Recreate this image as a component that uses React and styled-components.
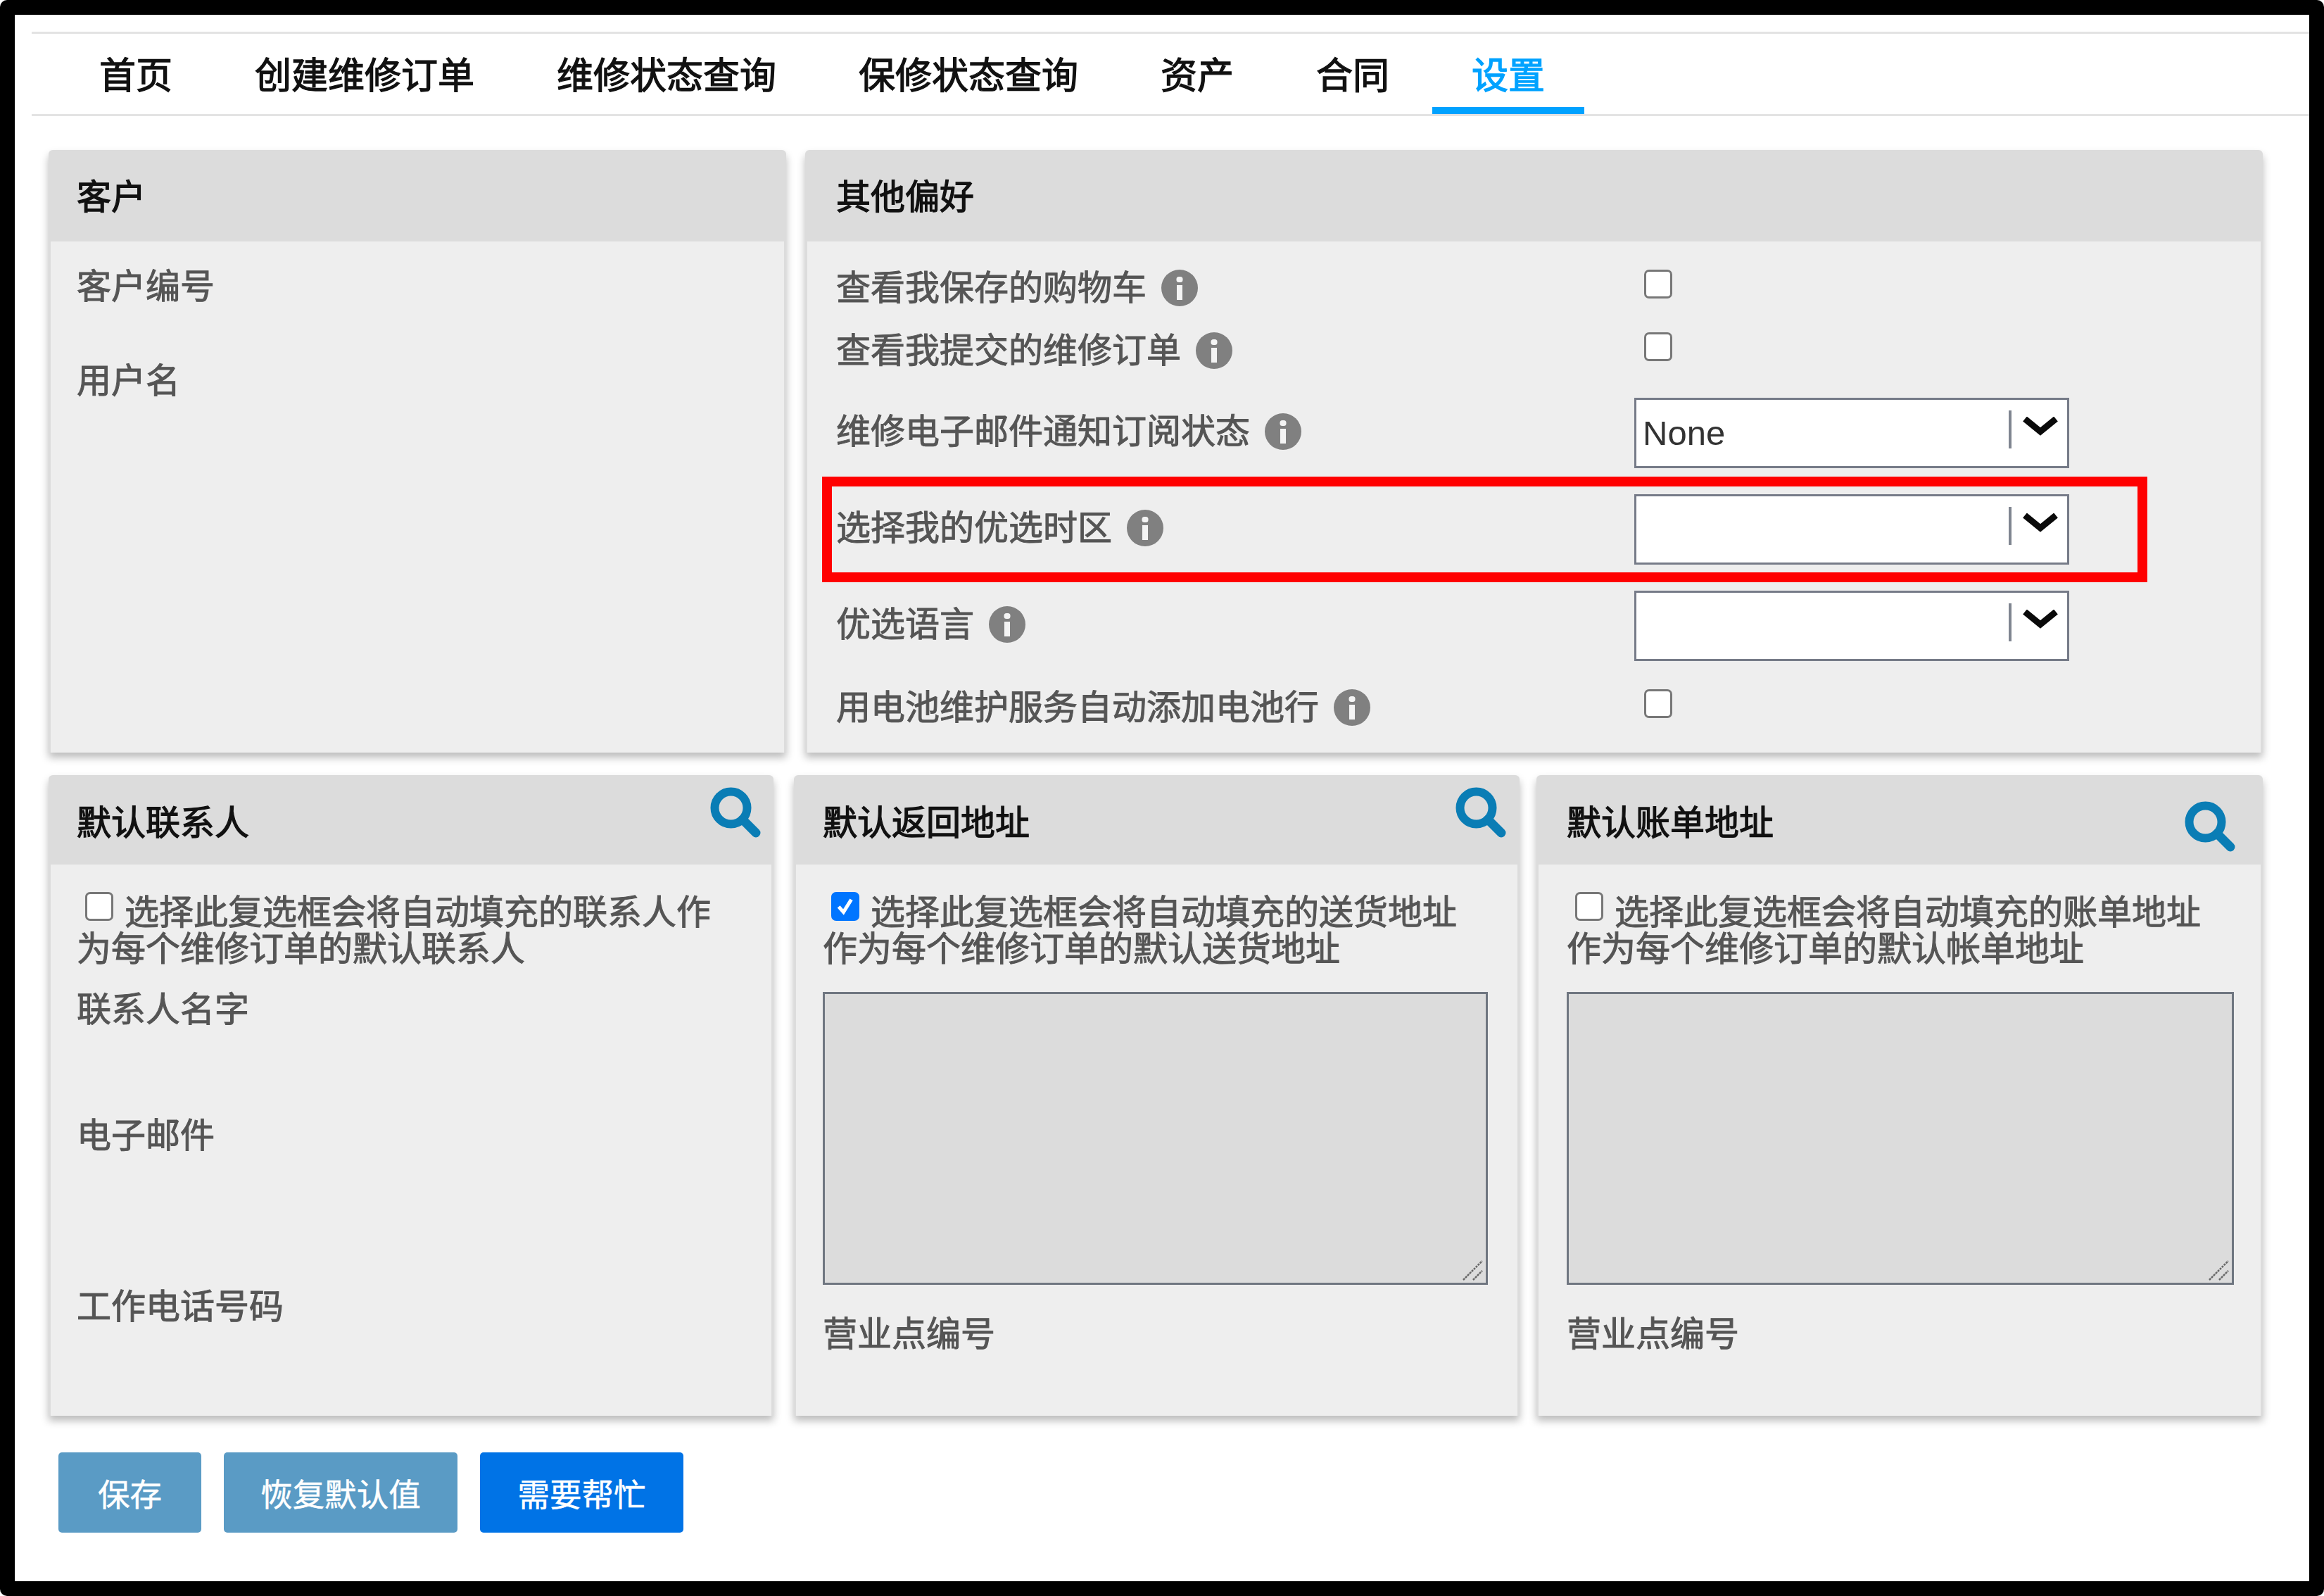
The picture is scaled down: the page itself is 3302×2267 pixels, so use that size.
import styled, { createGlobalStyle } from "styled-components";

const GlobalStyle = createGlobalStyle`
  html, body {
    margin: 0;
    padding: 0;
    background: #fff;
  }
  * {
    box-sizing: border-box;
  }
`;

const tabs = ["首页", "创建维修订单", "维修状态查询", "保修状态查询", "资产", "合同", "设置"];

const SearchIcon = () => (
  <svg width="72" height="72" viewBox="0 0 72 72">
    <circle cx="29.5" cy="29.5" r="23" fill="none" stroke="#0a7db5" strokeWidth="12" />
    <line x1="46" y1="46" x2="65" y2="65" stroke="#0a7db5" strokeWidth="13" strokeLinecap="round" />
  </svg>
);

const InfoIcon = () => (
  <InfoSvg viewBox="0 0 52 52">
    <circle cx="26" cy="26" r="26" fill="#808080" />
    <rect x="21.5" y="10" width="9" height="8" rx="3.5" fill="#f4f4f4" />
    <rect x="22" y="22" width="8" height="21" fill="#f4f4f4" />
  </InfoSvg>
);

const Chevron = () => (
  <svg width="52" height="28" viewBox="0 0 52 28">
    <path d="M4 3 L26 21 L48 3" fill="none" stroke="#0a0a0a" strokeWidth="9" />
  </svg>
);

const ResizeGrip = () => (
  <GripSvg viewBox="0 0 30 30">
    <line x1="1" y1="29" x2="28" y2="2" stroke="#666" strokeWidth="2.5" strokeDasharray="3 1.2" />
    <line x1="15" y1="29" x2="28" y2="16" stroke="#666" strokeWidth="2.5" strokeDasharray="3 1.2" />
  </GripSvg>
);

const Select = ({ value }) => (
  <SelectBox>
    <SelectValue>{value}</SelectValue>
    <SelectArrow>
      <Chevron />
    </SelectArrow>
  </SelectBox>
);

const PrefLabel = ({ children }) => (
  <LabelCell>
    <span>{children}</span>
    <InfoIcon />
  </LabelCell>
);

const AddressPanel = ({ title, checked, lines, width, gap, padLeft, areaWidth, iconRight, iconShift }) => (
  <Panel $width={width} $gap={gap}>
    <PanelHeader $height={127} $padLeft={padLeft} $padRight={iconRight}>
      <span>{title}</span>
      <IconSlot $shift={iconShift}>
        <SearchIcon />
      </IconSlot>
    </PanelHeader>
    <PanelBody $padLeft={padLeft - 3} $padTop={39}>
      <CheckText>
        <InlineBox type="checkbox" defaultChecked={checked} />
        {lines[0]}
        <br />
        {lines[1]}
      </CheckText>
      <AreaWrap $width={areaWidth}>
        <AddressArea readOnly />
        <ResizeGrip />
      </AreaWrap>
      <Field $top={44}>营业点编号</Field>
    </PanelBody>
  </Panel>
);

export default function App() {
  return (
    <>
      <GlobalStyle />
      <Frame>
        <Sheet>
          <TabBar>
            {tabs.map(tab => (
              <Tab key={tab} $active={tab === "设置"}>
                {tab}
              </Tab>
            ))}
          </TabBar>

          <TopRow>
            <Panel $width={1048}>
              <PanelHeader $height={130} $padLeft={40} $lift={5}>
                <span>客户</span>
              </PanelHeader>
              <PanelBody $padLeft={37} $padTop={38}>
                <Field>客户编号</Field>
                <Field $top={82}>用户名</Field>
              </PanelBody>
            </Panel>

            <Panel $width={2071} $gap={27}>
              <PanelHeader $height={130} $padLeft={44} $lift={5}>
                <span>其他偏好</span>
              </PanelHeader>
              <PanelBody $padLeft={41} $padTop={22}>
                <PrefRow $height={88}>
                  <PrefLabel>查看我保存的购物车</PrefLabel>
                  <RowCheck type="checkbox" />
                </PrefRow>
                <PrefRow $height={90}>
                  <PrefLabel>查看我提交的维修订单</PrefLabel>
                  <RowCheck type="checkbox" />
                </PrefRow>
                <PrefRow $height={140}>
                  <PrefLabel>维修电子邮件通知订阅状态</PrefLabel>
                  <Select value="None" />
                </PrefRow>
                <PrefRow $height={134}>
                  <PrefLabel>选择我的优选时区</PrefLabel>
                  <Select value="" />
                  <Highlight />
                </PrefRow>
                <PrefRow $height={140}>
                  <PrefLabel>优选语言</PrefLabel>
                  <Select value="" />
                </PrefRow>
                <PrefRow $height={96}>
                  <PrefLabel>用电池维护服务自动添加电池行</PrefLabel>
                  <RowCheck type="checkbox" />
                </PrefRow>
              </PanelBody>
            </Panel>
          </TopRow>

          <BottomRow>
            <Panel $width={1030}>
              <PanelHeader $height={127} $padLeft={40} $padRight={18}>
                <span>默认联系人</span>
                <IconSlot $shift={-11}>
                  <SearchIcon />
                </IconSlot>
              </PanelHeader>
              <PanelBody $padLeft={37} $padTop={39}>
                <CheckText>
                  <InlineBox type="checkbox" />
                  选择此复选框会将自动填充的联系人作
                  <br />
                  为每个维修订单的默认联系人
                </CheckText>
                <Field $top={34}>联系人名字</Field>
                <Field $top={127}>电子邮件</Field>
                <Field $top={191}>工作电话号码</Field>
              </PanelBody>
            </Panel>

            <AddressPanel
              title="默认返回地址"
              checked
              lines={["选择此复选框会将自动填充的送货地址", "作为每个维修订单的默认送货地址"]}
              width={1031}
              gap={29}
              padLeft={41}
              areaWidth={945}
              iconRight={19}
              iconShift={-11}
            />
            <AddressPanel
              title="默认账单地址"
              lines={["选择此复选框会将自动填充的账单地址", "作为每个维修订单的默认帐单地址"]}
              width={1032}
              gap={24}
              padLeft={43}
              areaWidth={948}
              iconRight={39}
              iconShift={9}
            />
          </BottomRow>

          <Actions>
            <ActionButton $width={203}>保存</ActionButton>
            <ActionButton $width={332}>恢复默认值</ActionButton>
            <ActionButton $width={289} $primary>
              需要帮忙
            </ActionButton>
          </Actions>
        </Sheet>
      </Frame>
    </>
  );
}

const Frame = styled.div`
  width: 3302px;
  height: 2267px;
  padding: 21px;
  background: #000;
  border-radius: 10px;
  font-family: "Liberation Sans", "Noto Sans CJK SC", sans-serif;
`;

const Sheet = styled.div`
  height: 100%;
  background: #fff;
  overflow: hidden;
`;

const TabBar = styled.nav`
  display: flex;
  gap: 5px;
  height: 120px;
  margin: 24px 0 0 24px;
  padding-left: 40px;
  border-top: 3px solid #e3e3e3;
  border-bottom: 3px solid #e3e3e3;
`;

const Tab = styled.div`
  display: flex;
  align-items: center;
  justify-content: center;
  padding: 6px 56px 0;
  font-size: 52px;
  color: ${p => (p.$active ? "#00a2ff" : "#111")};
  border-bottom: 10px solid ${p => (p.$active ? "#00a2ff" : "transparent")};
  -webkit-text-stroke: 1.3px currentColor;
`;

const TopRow = styled.div`
  display: flex;
  height: 856px;
  margin: 48px 0 0 48px;
`;

const BottomRow = styled.div`
  display: flex;
  height: 910px;
  margin: 32px 0 0 48px;
`;

const Panel = styled.section`
  display: flex;
  flex-direction: column;
  width: ${p => p.$width}px;
  margin-left: ${p => p.$gap || 0}px;
  padding: 0 3px;
  background: #dcdcdc;
  border-radius: 6px 6px 0 0;
  box-shadow: 0 7px 12px rgba(0, 0, 0, 0.27);
`;

const PanelHeader = styled.header`
  display: flex;
  flex: none;
  align-items: center;
  justify-content: space-between;
  height: ${p => p.$height}px;
  margin: 0 -3px;
  padding: 0 ${p => p.$padRight || 0}px ${p => p.$lift || 0}px ${p => p.$padLeft}px;
  font-size: 49px;
  color: #111;
  -webkit-text-stroke: 1.3px currentColor;
`;

const IconSlot = styled.span`
  display: flex;
  margin-top: ${p => p.$shift}px;
  margin-bottom: ${p => -p.$shift}px;
`;

const PanelBody = styled.div`
  flex: 1;
  padding: ${p => p.$padTop}px 0 0 ${p => p.$padLeft}px;
  background: #eee;
  font-size: 49px;
  line-height: 52px;
  color: #555;
  -webkit-text-stroke: 1px currentColor;
`;

const Field = styled.div`
  height: 52px;
  margin-top: ${p => p.$top || 0}px;
`;

const PrefRow = styled.div`
  position: relative;
  display: flex;
  align-items: center;
  height: ${p => p.$height}px;
`;

const LabelCell = styled.div`
  display: flex;
  flex: none;
  align-items: center;
  gap: 21px;
  width: 1134px;
`;

const InfoSvg = styled.svg`
  flex: none;
  width: 52px;
  height: 52px;
`;

const checkboxBase = `
  appearance: none;
  width: 40px;
  height: 41px;
  border: 3px solid #777;
  border-radius: 7px;
  background: #fff;
  &:checked {
    border-color: #0075ff;
    background: #0075ff url("data:image/svg+xml,%3Csvg xmlns='http://www.w3.org/2000/svg' viewBox='0 0 40 41'%3E%3Cpath d='M9 21 L17 30 L30 9' fill='none' stroke='white' stroke-width='6'/%3E%3C/svg%3E") center / 100% 100% no-repeat;
  }
`;

const RowCheck = styled.input`
  ${checkboxBase}
  flex: none;
  margin: -12px 0 0 14px;
`;

const InlineBox = styled.input`
  ${checkboxBase}
  margin: 0 16px 0 12px;
  vertical-align: 5px;
`;

const CheckText = styled.p`
  margin: 0;
  white-space: nowrap;
`;

const SelectBox = styled.div`
  display: flex;
  align-items: center;
  width: 618px;
  height: 100px;
  margin-top: 3px;
  padding: 0 12px 0 9px;
  background: #fff;
  border: 3px solid #767b88;
`;

const SelectValue = styled.span`
  flex: 1;
  font-family: "Liberation Sans", sans-serif;
  font-size: 49px;
  color: #333;
  -webkit-text-stroke: 0;
`;

const SelectArrow = styled.span`
  display: flex;
  align-items: center;
  justify-content: flex-end;
  width: 71px;
  height: 54px;
  margin-top: -10px;
  border-left: 4px solid #7f8590;

  svg {
    margin-top: -7px;
  }
`;

const Highlight = styled.div`
  position: absolute;
  top: -6px;
  left: -20px;
  width: 1883px;
  height: 150px;
  border: 14px solid #ff0000;
  pointer-events: none;
`;

const AreaWrap = styled.div`
  position: relative;
  width: ${p => p.$width}px;
  height: 416px;
  margin-top: 35px;
`;

const AddressArea = styled.textarea`
  display: block;
  width: 100%;
  height: 100%;
  background: #dcdcdc;
  border: 3px solid #6f7680;
  border-radius: 0;
  resize: none;
  outline: none;
`;

const GripSvg = styled.svg`
  position: absolute;
  right: 6px;
  bottom: 6px;
  width: 30px;
  height: 30px;
`;

const Actions = styled.div`
  display: flex;
  gap: 32px;
  margin: 52px 0 0 62px;
`;

const ActionButton = styled.button`
  width: ${p => p.$width}px;
  height: 114px;
  padding: 0;
  border: none;
  border-radius: 5px;
  background: ${p => (p.$primary ? "#0073e6" : "#5a9bc5")};
  color: #fff;
  font-family: inherit;
  font-size: 45.5px;
  -webkit-text-stroke: 0.5px currentColor;
`;
